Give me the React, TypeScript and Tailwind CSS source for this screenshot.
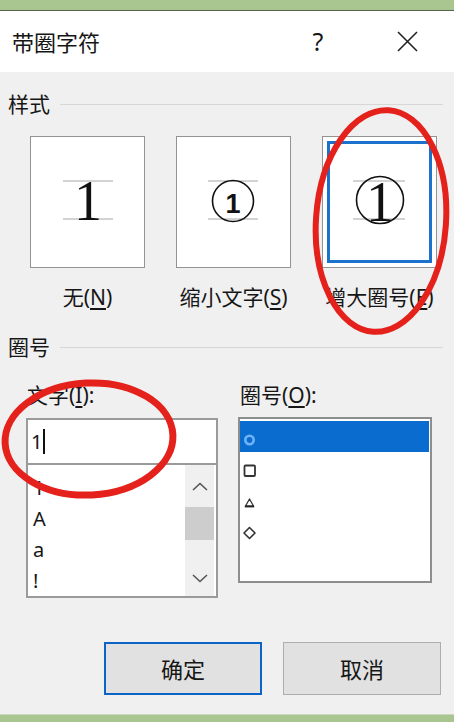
import React from "react";

function SectionTitle({ label, className = "" }: { label: string; className?: string }) {
  return (
    <div className={`flex h-[22px] items-center ${className}`}>
      <span className="pl-[8px] text-[21px] leading-none">{label}</span>
      <div className="ml-[10px] mr-[11px] h-px flex-1 bg-[#d7d7d7]" />
    </div>
  );
}

function Mnemonic({ text, k }: { text: string; k: string }) {
  return (
    <span className="whitespace-nowrap">
      {text}(<span className="underline underline-offset-[3px]">{k}</span>)
    </span>
  );
}

function GuideLines({ x1, x2, y1, y2 }: { x1: number; x2: number; y1: number; y2: number }) {
  return (
    <>
      <line x1={x1} x2={x2} y1={y1} y2={y1} stroke="#a6a6a6" strokeWidth="1" />
      <line x1={x1} x2={x2} y1={y2} y2={y2} stroke="#a6a6a6" strokeWidth="1" />
    </>
  );
}

function StyleOption({ label, k, children, selected }: { label: string; k: string; children: React.ReactNode; selected?: boolean }) {
  return (
    <div className="flex w-[115px] flex-col items-center">
      <div className={`h-[132px] w-full border border-[#939393] bg-white ${selected ? "p-[4px]" : ""}`}>
        {selected ? <div className="h-full w-full border-[3px] border-[#1a72cc]">{children}</div> : children}
      </div>
      <div className="mt-[18px] text-[21px] leading-[22px]">
        <Mnemonic text={label} k={k} />
      </div>
    </div>
  );
}

function Shape({ kind }: { kind: "circle" | "square" | "triangle" | "diamond" }) {
  return (
    <svg width="14" height="14" viewBox="0 0 14 14" fill="none">
      {kind === "circle" && <circle cx="6.5" cy="7" r="4.2" stroke="#6db5f6" strokeWidth="2.6" />}
      {kind === "square" && <rect x="1.5" y="1.5" width="10.5" height="10.5" rx="1" stroke="#333" strokeWidth="1.8" />}
      {kind === "triangle" && (
        <>
          <path d="M6.5 4 L10.5 11 L2.5 11 Z" stroke="#333" strokeWidth="1.3" strokeLinejoin="round" />
          <line x1="1.8" x2="11.2" y1="11.6" y2="11.6" stroke="#222" strokeWidth="1.6" />
        </>
      )}
      {kind === "diamond" && <path d="M6.5 1.5 L12 7 L6.5 12.5 L1 7 Z" stroke="#333" strokeWidth="1.6" strokeLinejoin="round" />}
    </svg>
  );
}

export default function App() {
  const chars = ["1", "A", "a", "!"];
  const shapes: ("circle" | "square" | "triangle" | "diamond")[] = ["circle", "square", "triangle", "diamond"];

  return (
    <div className="relative flex h-[722px] w-[454px] flex-col overflow-hidden bg-[#f0f0f0] font-['Noto_Sans','Noto_Sans_CJK_SC',sans-serif] text-[#161616]">
      <div className="h-[10px] bg-[#a9c691]" />
      <div className="h-px bg-[#56634c]" />

      <header className="flex h-[61px] items-center bg-white pr-[36px]">
        <span className="ml-[12px] text-[22px] leading-none">带圈字符</span>
        <span className="ml-auto w-[20px] text-center text-[25px] leading-none">?</span>
        <svg className="ml-[69px]" width="21" height="21" viewBox="0 0 21 21">
          <path d="M1 1 L20 20 M20 1 L1 20" stroke="#222" strokeWidth="1.6" />
        </svg>
      </header>

      <main className="flex flex-1 flex-col">
        <SectionTitle label="样式" className="mt-[21px]" />

        <div className="mt-[21px] flex gap-[31px] pl-[30px]">
          <StyleOption label="无" k="N">
            <svg width="113" height="130" viewBox="0 0 113 130">
              <GuideLines x1={32} x2={82} y1={44} y2={82} />
              <text x="57" y="83" textAnchor="middle" fontFamily="Liberation Serif" fontSize="56" fill="#111">
                1
              </text>
            </svg>
          </StyleOption>
          <StyleOption label="缩小文字" k="S">
            <svg width="113" height="130" viewBox="0 0 113 130">
              <GuideLines x1={31} x2={81} y1={44} y2={82} />
              <circle cx="56" cy="64" r="20.5" fill="none" stroke="#111" strokeWidth="1.6" />
              <text x="56" y="76" textAnchor="middle" fontFamily="Liberation Sans" fontWeight="bold" fontSize="27" fill="#111">
                1
              </text>
            </svg>
          </StyleOption>
          <StyleOption label="增大圈号" k="E" selected>
            <svg width="99" height="116" viewBox="0 0 99 116">
              <GuideLines x1={23} x2={75} y1={37} y2={75} />
              <circle cx="50" cy="56" r="23.5" fill="none" stroke="#111" strokeWidth="1.6" />
              <text x="50" y="77" textAnchor="middle" fontFamily="Liberation Serif" fontSize="56" fill="#111">
                1
              </text>
            </svg>
          </StyleOption>
        </div>

        <SectionTitle label="圈号" className="mt-[28px]" />

        <div className="mt-[26px] flex">
          <div className="ml-[26px] flex w-[192px] flex-col">
            <div className="pl-[1px] text-[21px] leading-[22px]">
              <Mnemonic text="文字" k="I" />:
            </div>
            <div className="mt-[12px] flex h-[47px] items-center border-2 border-[#9a9a9a] bg-white pl-[3px]">
              <span className="text-[20px] leading-none">1</span>
              <span className="ml-[1px] h-[25px] w-[2px] bg-[#111]" />
            </div>
            <div className="flex h-[133px] border-2 border-t-0 border-[#9a9a9a] bg-white">
              <div className="flex flex-1 flex-col pl-[5px] pt-[7px]">
                {chars.map((c) => (
                  <div key={c} className="h-[31px] text-[20px] leading-[31px]">
                    {c}
                  </div>
                ))}
              </div>
              <div className="mr-[2px] flex w-[29px] flex-col bg-[#f0f0f0]">
                <div className="flex h-[42px] items-center justify-center">
                  <svg width="16" height="9" viewBox="0 0 16 9">
                    <path d="M1 8 L8 1.5 L15 8" fill="none" stroke="#555" strokeWidth="1.6" />
                  </svg>
                </div>
                <div className="h-[33px] bg-[#cdcdcd]" />
                <div className="flex-1" />
                <div className="flex h-[36px] items-center justify-center">
                  <svg width="16" height="9" viewBox="0 0 16 9">
                    <path d="M1 1 L8 7.5 L15 1" fill="none" stroke="#555" strokeWidth="1.6" />
                  </svg>
                </div>
              </div>
            </div>
          </div>

          <div className="ml-[20px] flex w-[194px] flex-col">
            <div className="pl-[2px] text-[21px] leading-[22px]">
              <Mnemonic text="圈号" k="O" />:
            </div>
            <div className="mt-[11px] h-[166px] border-2 border-[#8e8e8e] bg-white p-[2px] pl-[0px] pr-[1px]">
              {shapes.map((s, i) => (
                <div
                  key={s}
                  className={`flex h-[31px] items-center pl-[3px] pt-[6px] ${i === 0 ? "bg-[#0a6ccf]" : ""}`}
                >
                  <Shape kind={s} />
                </div>
              ))}
            </div>
          </div>
        </div>

        <div className="mb-[19px] mt-auto flex justify-end gap-[21px] pr-[13px]">
          <button className="h-[53px] w-[158px] border-2 border-[#0b64c6] bg-[#e1e1e1] text-[22px] leading-none">确定</button>
          <button className="h-[53px] w-[158px] border border-[#adadad] bg-[#e1e1e1] text-[22px] leading-none">取消</button>
        </div>
      </main>

      <div className="h-px bg-[#c9d8bd]" />
      <div className="h-[7px] bg-[#a9c691]" />

      <svg className="pointer-events-none absolute left-0 top-0" width="454" height="722" viewBox="0 0 454 722" fill="none">
        <ellipse cx="381" cy="221" rx="65" ry="111" stroke="#e4221b" strokeWidth="6" transform="rotate(4 381 221)" />
        <ellipse cx="89" cy="439" rx="84" ry="56" stroke="#e4221b" strokeWidth="7" transform="rotate(-3 89 439)" />
      </svg>
    </div>
  );
}
